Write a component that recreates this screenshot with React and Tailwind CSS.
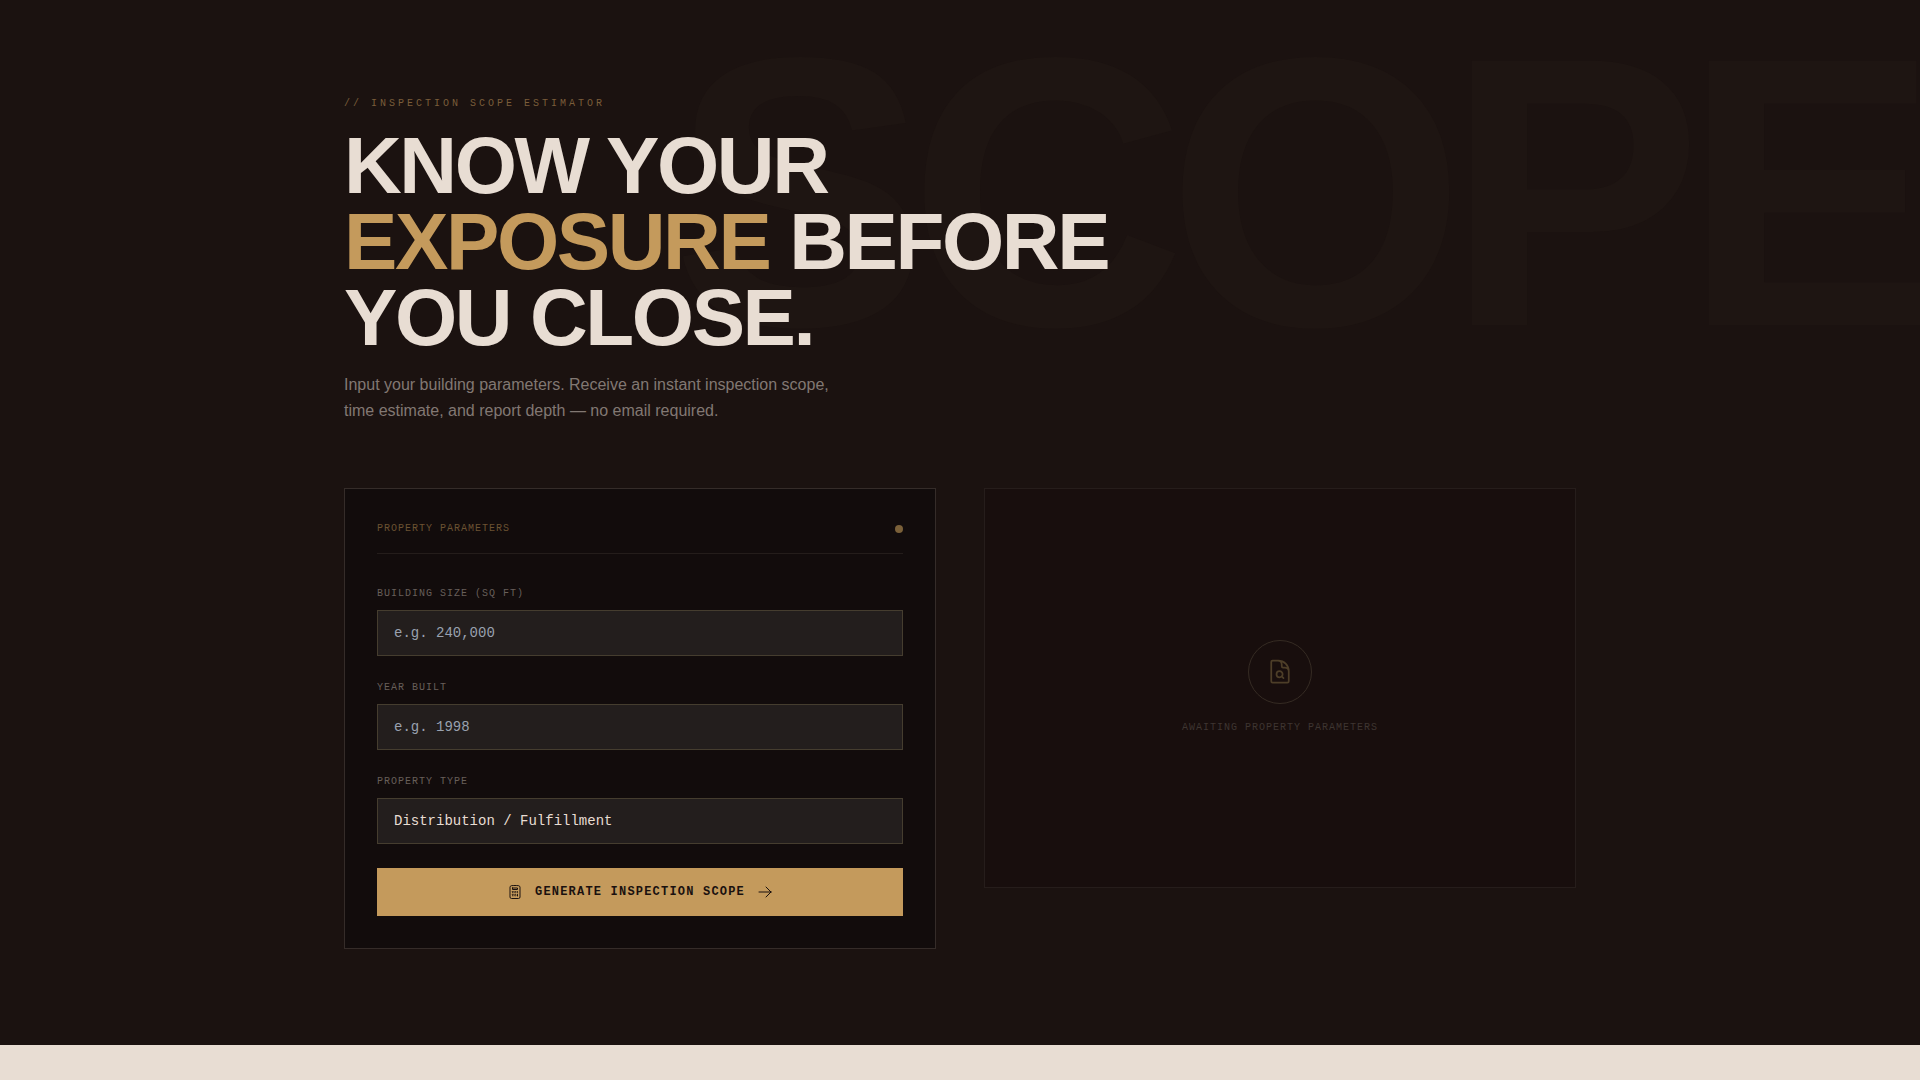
import React, { useState } from 'react';
import {
    HiOutlineArrowRight,
    HiOutlineCalculator,
    HiOutlineDocumentMagnifyingGlass,
} from 'react-icons/hi2';

const PROPERTY_TYPES = [
    'Distribution / Fulfillment',
    'Manufacturing',
    'Cold Storage',
    'Flex / R&D',
];

const fieldClass = 'block w-full appearance-none rounded-none border border-[#453d2f] bg-[#231e1d] px-4 py-3 font-["Liberation_Mono",monospace] text-sm text-[#e8ddd3] placeholder:text-gray-400 focus:border-[#c49a5c] focus:outline-none';

const Field = ({ id, label, children }) => (
    <div className="flex flex-col gap-2">
        <label htmlFor={id} className="text-[10px] leading-4 tracking-widest uppercase text-[#675f5a]">{label}</label>
        {children}
    </div>
)

const ScopeForm = () => {
    const [size, setSize] = useState('');
    const [year, setYear] = useState('');
    const [type, setType] = useState(PROPERTY_TYPES[0]);

    return (
        <form
            className='border border-[#352c29] bg-[#120c0c] p-8 font-["Liberation_Mono",monospace]'
            onSubmit={(e) => e.preventDefault()}
        >
            <div className="mb-8 flex items-center justify-between border-b border-[#241d1b] pb-4">
                <h2 className="text-[10px] leading-4 tracking-widest uppercase text-[#6b5232]">Property Parameters</h2>
                <span className="size-2 rounded-full bg-[#7a6039]" />
            </div>
            <div className="flex flex-col gap-6">
                <Field id="size" label="Building Size (sq ft)">
                    <input
                        id="size"
                        type="text"
                        placeholder="e.g. 240,000"
                        className={fieldClass}
                        value={size}
                        onChange={(e) => setSize(e.target.value)}
                    />
                </Field>
                <Field id="year" label="Year Built">
                    <input
                        id="year"
                        type="text"
                        placeholder="e.g. 1998"
                        className={fieldClass}
                        value={year}
                        onChange={(e) => setYear(e.target.value)}
                    />
                </Field>
                <Field id="type" label="Property Type">
                    <select
                        id="type"
                        className={fieldClass}
                        value={type}
                        onChange={(e) => setType(e.target.value)}
                    >
                        {PROPERTY_TYPES.map((t) => <option key={t}>{t}</option>)}
                    </select>
                </Field>
                <button type="submit" className="flex h-12 w-full items-center justify-center gap-3 bg-[#c49a5c] text-xs font-bold tracking-widest uppercase text-[#1a110f]">
                    <HiOutlineCalculator className="size-4" />
                    Generate Inspection Scope
                    <HiOutlineArrowRight className="size-4" />
                </button>
            </div>
        </form>
    )
}

const EmptyResult = () => (
    <div className="flex min-h-[400px] flex-col items-center justify-center gap-4 border border-[#261d1b] bg-[#180e0d]">
        <div className="flex size-16 items-center justify-center rounded-full border border-[#352b23]">
            <HiOutlineDocumentMagnifyingGlass className="size-7 text-[#4d3e28]" />
        </div>
        <p className='font-["Liberation_Mono",monospace] text-[10px] leading-4 tracking-widest uppercase text-[#3e3531]'>Awaiting Property Parameters</p>
    </div>
)

const App = () => (
    <main className='min-h-screen bg-[#e8ddd3] font-["Liberation_Sans",Arial,sans-serif]'>
        <section className="relative overflow-hidden bg-[#1b1210] py-24">
            <div aria-hidden="true" className="pointer-events-none absolute top-0 right-0 text-[20vw] leading-none font-bold tracking-tighter text-[#1e1512] select-none">SCOPE</div>
            <div className="relative mx-auto max-w-7xl px-6">
                <header className="mb-16">
                    <p className='mb-4 font-["Liberation_Mono",monospace] text-[10px] leading-4 tracking-[0.3em] uppercase text-[#7a5d3a]'>// Inspection Scope Estimator</p>
                    <h1 className="mb-4 text-[80px] leading-[76px] font-bold tracking-[-0.03em] uppercase text-[#e8ddd3]">
                        Know your<br />
                        <span className="text-[#c49a5c]">Exposure</span> before<br />
                        you close.
                    </h1>
                    <p className="max-w-lg text-base leading-[26px] text-[#827873]">
                        Input your building parameters. Receive an instant inspection scope, time estimate, and report depth — no email required.
                    </p>
                </header>
                <div className="grid grid-cols-1 items-start gap-12 lg:grid-cols-2">
                    <ScopeForm />
                    <EmptyResult />
                </div>
            </div>
        </section>
    </main>
)

export default App;
